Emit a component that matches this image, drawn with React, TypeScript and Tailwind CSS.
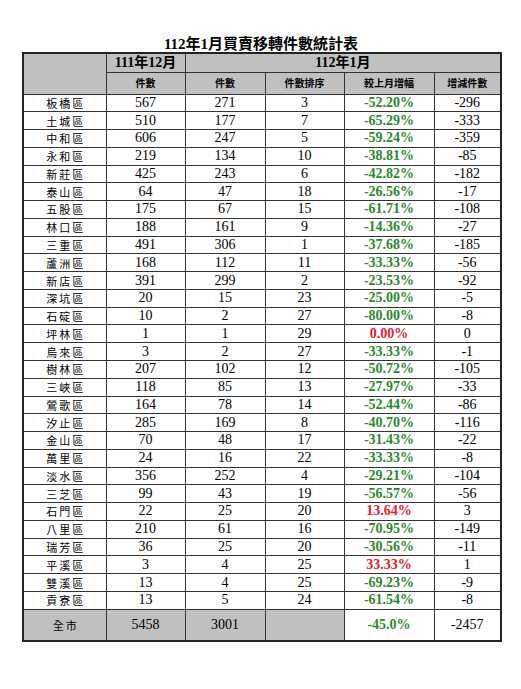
const rows: [string, number, number, number, string, number][] = [
    ['板橋區', 567, 271, 3, '-52.20%', -296],
    ['土城區', 510, 177, 7, '-65.29%', -333],
    ['中和區', 606, 247, 5, '-59.24%', -359],
    ['永和區', 219, 134, 10, '-38.81%', -85],
    ['新莊區', 425, 243, 6, '-42.82%', -182],
    ['泰山區', 64, 47, 18, '-26.56%', -17],
    ['五股區', 175, 67, 15, '-61.71%', -108],
    ['林口區', 188, 161, 9, '-14.36%', -27],
    ['三重區', 491, 306, 1, '-37.68%', -185],
    ['蘆洲區', 168, 112, 11, '-33.33%', -56],
    ['新店區', 391, 299, 2, '-23.53%', -92],
    ['深坑區', 20, 15, 23, '-25.00%', -5],
    ['石碇區', 10, 2, 27, '-80.00%', -8],
    ['坪林區', 1, 1, 29, '0.00%', 0],
    ['烏來區', 3, 2, 27, '-33.33%', -1],
    ['樹林區', 207, 102, 12, '-50.72%', -105],
    ['三峽區', 118, 85, 13, '-27.97%', -33],
    ['鶯歌區', 164, 78, 14, '-52.44%', -86],
    ['汐止區', 285, 169, 8, '-40.70%', -116],
    ['金山區', 70, 48, 17, '-31.43%', -22],
    ['萬里區', 24, 16, 22, '-33.33%', -8],
    ['淡水區', 356, 252, 4, '-29.21%', -104],
    ['三芝區', 99, 43, 19, '-56.57%', -56],
    ['石門區', 22, 25, 20, '13.64%', 3],
    ['八里區', 210, 61, 16, '-70.95%', -149],
    ['瑞芳區', 36, 25, 20, '-30.56%', -11],
    ['平溪區', 3, 4, 25, '33.33%', 1],
    ['雙溪區', 13, 4, 25, '-69.23%', -9],
    ['貢寮區', 13, 5, 24, '-61.54%', -8],
]

const serif = "font-['Liberation_Serif','Noto_Sans_CJK_TC',serif]"
const cell = 'border border-[#333] text-center p-0'
const name = "text-[11px] tracking-[2px] pl-[2px] font-['Noto_Sans_CJK_TC',serif]"

export default function App() {
    return (
        <div className={`w-[521px] h-[689px] bg-white pt-[36px] pl-[22px] ${serif} text-black`}>
            <h1 className="w-[478px] text-center font-bold text-[15px] leading-[16px] h-[16px]">112年1月買賣移轉件數統計表</h1>
            <table className="w-[478px] table-fixed border-collapse border-2 border-[#222] text-[14px]">
                <colgroup>
                    <col className="w-[83px]" />
                    <col className="w-[79px]" />
                    <col className="w-[80px]" />
                    <col className="w-[79px]" />
                    <col className="w-[90px]" />
                    <col className="w-[67px]" />
                </colgroup>
                <thead>
                    <tr className="h-[19px] bg-[#c0c0c0] font-bold">
                        <th rowSpan={2} className={cell}></th>
                        <th className={`${cell} text-[14px] leading-[16px]`}>111年12月</th>
                        <th colSpan={4} className={`${cell} text-[14px] leading-[16px]`}>112年1月</th>
                    </tr>
                    <tr className="h-[22px] bg-[#c0c0c0] text-[10px] font-bold">
                        <th className={cell}>件數</th>
                        <th className={cell}>件數</th>
                        <th className={cell}>件數排序</th>
                        <th className={cell}>較上月增幅</th>
                        <th className={cell}>增減件數</th>
                    </tr>
                </thead>
                <tbody>
                    {rows.map(([district, dec, jan, rank, pct, diff]) => (
                        <tr key={district} className="h-[17.78px] leading-[16px]">
                            <td className={`${cell} ${name}`}>{district}</td>
                            <td className={cell}>{dec}</td>
                            <td className={cell}>{jan}</td>
                            <td className={cell}>{rank}</td>
                            <td className={`${cell} font-bold ${pct.startsWith('-') ? 'text-[#2a8a2a]' : 'text-[#e0202a]'}`}>{pct}</td>
                            <td className={cell}>{diff}</td>
                        </tr>
                    ))}
                    <tr className="h-[32px]">
                        <td className={`${cell} bg-[#c0c0c0] ${name}`}>全市</td>
                        <td className={`${cell} bg-[#c0c0c0]`}>5458</td>
                        <td className={`${cell} bg-[#c0c0c0]`}>3001</td>
                        <td className={`${cell} bg-[#c0c0c0]`}></td>
                        <td className={`${cell} font-bold text-[#2a8a2a]`}>-45.0%</td>
                        <td className={cell}>-2457</td>
                    </tr>
                </tbody>
            </table>
        </div>
    )
}
